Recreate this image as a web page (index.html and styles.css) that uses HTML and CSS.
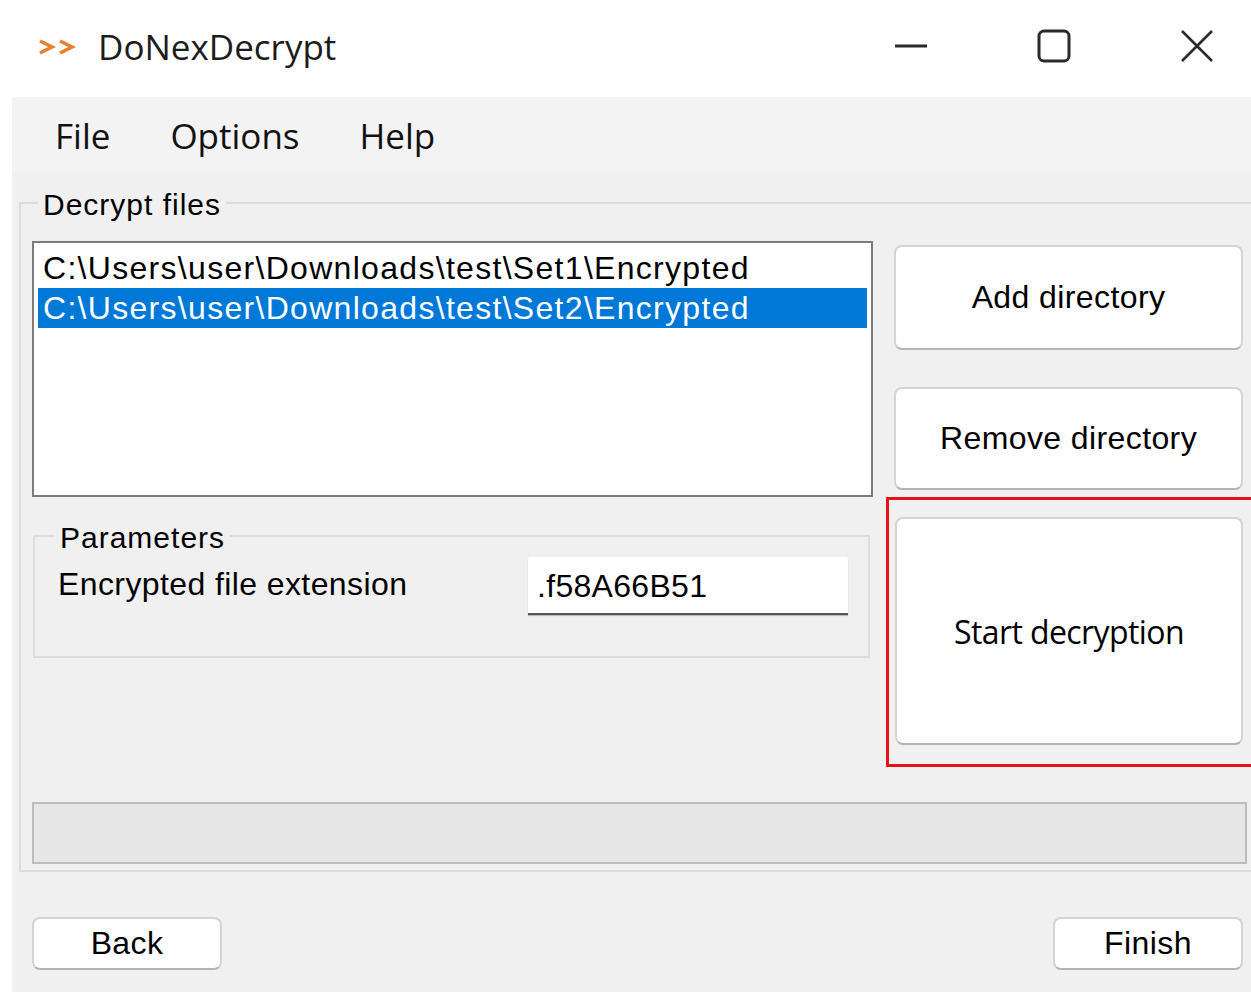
FILE: index.html
```html
<!DOCTYPE html>
<html lang="en">
<head>
<meta charset="utf-8">
<title>DoNexDecrypt</title>
<link rel="stylesheet" href="styles.css">
</head>
<body>
  <header class="titlebar">
    <svg class="app-icon" viewBox="0 0 40 18" aria-hidden="true">
      <path d="M3 3 L15 9 L3 15" />
      <path d="M23 3 L35 9 L23 15" />
    </svg>
    <span class="title">DoNexDecrypt</span>
    <div class="caption">
      <svg class="cap-icon" viewBox="0 0 34 34" aria-hidden="true"><path d="M1 17 H33" /></svg>
      <svg class="cap-icon" viewBox="0 0 34 34" aria-hidden="true"><rect x="2" y="2" width="30" height="30" rx="5" /></svg>
      <svg class="cap-icon thin" viewBox="0 0 34 34" aria-hidden="true"><path d="M2 2 L32 32 M32 2 L2 32" /></svg>
    </div>
  </header>

  <main class="window">
    <nav class="menubar">
      <span>File</span>
      <span>Options</span>
      <span>Help</span>
    </nav>

    <fieldset class="group">
      <legend class="group-title">Decrypt files</legend>
      <div class="group-body">
        <div class="left-col">
          <ul class="listbox">
            <li>C:\Users\user\Downloads\test\Set1\Encrypted</li>
            <li class="selected">C:\Users\user\Downloads\test\Set2\Encrypted</li>
          </ul>
          <fieldset class="params">
            <legend class="group-title">Parameters</legend>
            <div class="param-row">
              <label class="param-label" for="ext">Encrypted file extension</label>
              <input class="textbox" id="ext" type="text" value=".f58A66B51">
            </div>
          </fieldset>
        </div>
        <div class="right-col">
          <button class="btn side-btn add">Add directory</button>
          <button class="btn side-btn remove">Remove directory</button>
          <div class="highlight">
            <button class="btn start">Start decryption</button>
          </div>
        </div>
      </div>
      <div class="progress"></div>
    </fieldset>

    <div class="footer">
      <button class="btn nav-btn">Back</button>
      <button class="btn nav-btn">Finish</button>
    </div>
  </main>
</body>
</html>
```

FILE: styles.css
```css
html, body {
  margin: 0;
  padding: 0;
}

body {
  width: 1251px;
  height: 992px;
  overflow: hidden;
  background: #ffffff;
  font-family: "Liberation Sans", Arial, sans-serif;
  color: #000;
}

/* ---------- title bar ---------- */
.titlebar {
  display: flex;
  align-items: center;
  height: 97px;
  padding-left: 37px;
}

.app-icon {
  width: 40px;
  height: 18px;
  margin-right: 21px;
  margin-bottom: 3px;
  fill: none;
  stroke: #e8802f;
  stroke-width: 3.6;
  stroke-linejoin: miter;
}

.title {
  margin-bottom: 4px;
  font-family: "Open Sans", "Noto Sans", sans-serif;
  font-size: 35px;
  line-height: 1;
  color: #1c1c1c;
}

.caption {
  margin-left: auto;
  margin-bottom: 5px;
  display: flex;
  align-items: center;
  gap: 109px;
  padding-right: 37px;
}

.cap-icon {
  width: 34px;
  height: 34px;
  fill: none;
  stroke: #2a2a2a;
  stroke-width: 3;
}

.cap-icon.thin {
  stroke-width: 2.6;
}

/* ---------- client area ---------- */
.window {
  margin-left: 12px;
  height: 895px;
  background: #f0f0f0;
  overflow: hidden;
}

.menubar {
  display: flex;
  gap: 60px;
  box-sizing: border-box;
  height: 75px;
  padding: 21px 0 0 43px;
  background: #f3f3f3;
  font-family: "Open Sans", "Noto Sans", sans-serif;
  font-size: 35px;
  line-height: 35px;
  color: #111;
}

/* ---------- group boxes ---------- */
.group {
  margin: 13px 0 0 7px;
  width: 1260px;
  border: 2px solid #dcdcdc;
  padding: 20px 0 6px 11px;
  min-width: 0;
}

.group-title {
  padding: 4px 5px 0;
  font-size: 30px;
  line-height: 32px;
  letter-spacing: 1px;
  color: #000;
}

.group > .group-title {
  margin-left: 6px;
}

.group-body {
  display: flex;
}

.left-col {
  width: 841px;
}

.right-col {
  margin-left: 13px;
  width: 380px;
}

/* ---------- list box ---------- */
.listbox {
  box-sizing: border-box;
  height: 256px;
  margin: 0;
  padding: 5px 4px 0;
  list-style: none;
  background: #ffffff;
  border: 2px solid #7c7c7c;
}

.listbox li {
  height: 40px;
  padding-left: 5px;
  font-size: 32px;
  line-height: 40px;
  letter-spacing: 1.3px;
  white-space: nowrap;
}

.listbox li.selected {
  background: #0078d7;
  color: #ffffff;
}

/* ---------- parameters ---------- */
.params {
  box-sizing: border-box;
  width: 837px;
  margin: 21px 0 0 1px;
  border: 2px solid #dcdcdc;
  padding: 3px 0 41px 0;
  min-width: 0;
}

.params > .group-title {
  margin-left: 20px;
}

.param-row {
  display: flex;
  align-items: flex-start;
  padding-left: 23px;
}

.param-label {
  width: 470px;
  padding-top: 7px;
  font-size: 32px;
  line-height: 40px;
  letter-spacing: 0.4px;
}

.textbox {
  box-sizing: border-box;
  width: 320px;
  height: 58px;
  margin: 0;
  padding: 2px 9px 0;
  border: none;
  border-bottom: 2px solid #555555;
  border-radius: 2px 2px 0 0;
  background: #ffffff;
  box-shadow: 0 1px 1px rgba(0, 0, 0, 0.25);
  font-family: "Liberation Sans", Arial, sans-serif;
  font-size: 32px;
  letter-spacing: 0.3px;
  color: #000;
  outline: none;
}

/* ---------- buttons ---------- */
.btn {
  display: block;
  box-sizing: border-box;
  margin: 0;
  padding: 0;
  background: #fefefe;
  border: 2px solid #d4d4d4;
  border-bottom-color: #b4b4b4;
  border-radius: 8px;
  font-family: "Liberation Sans", Arial, sans-serif;
  font-size: 32px;
  letter-spacing: 0.4px;
  color: #000;
}

.side-btn {
  width: 349px;
  margin-left: 8px;
}

.add {
  height: 105px;
  margin-top: 4px;
}

.remove {
  height: 103px;
  margin-top: 37px;
}

.highlight {
  margin-top: 7px;
  width: 380px;
  border: 3px solid #e8101a;
  padding: 17px 0 19px 6px;
}

.start {
  width: 348px;
  height: 228px;
  font-family: "Open Sans", "Noto Sans", sans-serif;
  font-size: 32px;
  letter-spacing: -0.6px;
}

/* ---------- progress ---------- */
.progress {
  box-sizing: border-box;
  width: 1215px;
  height: 62px;
  margin-top: 35px;
  background: #e6e6e6;
  border: 2px solid #bcbcbc;
}

/* ---------- footer ---------- */
.footer {
  display: flex;
  justify-content: space-between;
  margin-top: 45px;
  padding: 0 8px 0 20px;
}

.nav-btn {
  width: 190px;
  height: 53px;
}
```
